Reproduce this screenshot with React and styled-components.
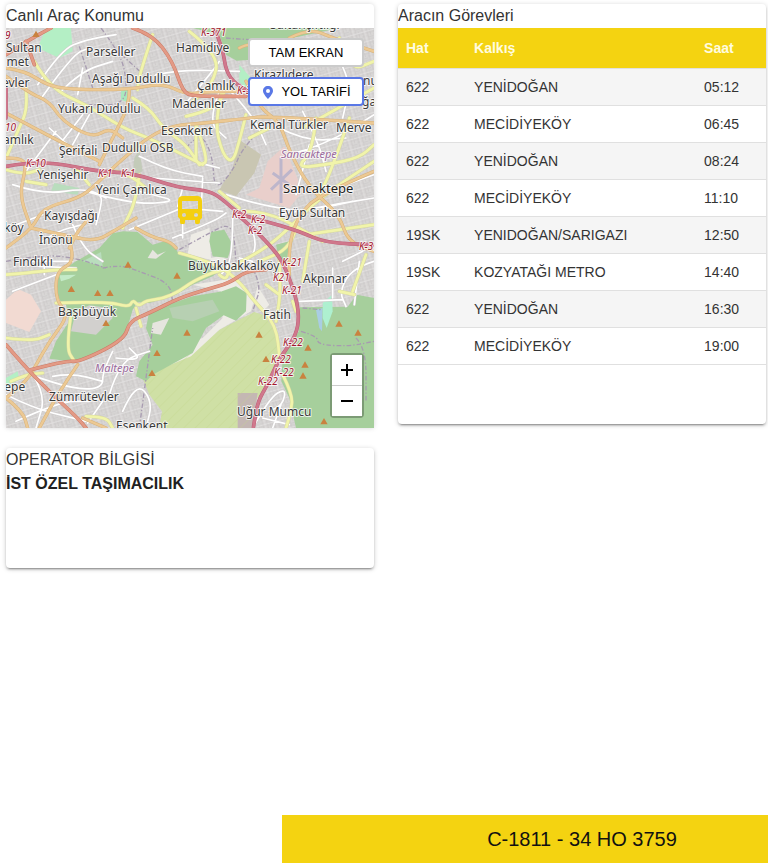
import React from "react";
import styled, { createGlobalStyle } from "styled-components";

const GlobalStyle = createGlobalStyle`
  *, *::before, *::after { box-sizing: border-box; }
  html { overflow-x: hidden; }
  body {
    margin: 0;
    background: #fff;
    color: #212121;
    font-family: "Liberation Sans", Arial, sans-serif;
    font-size: 16px;
    line-height: 24px;
  }
`;

const Page = styled.div`
  display: flex;
  flex-direction: column;
  min-height: 100vh;
`;

const Cards = styled.main`
  display: grid;
  grid-template-columns: repeat(2, minmax(0, 1fr));
  align-items: start;
  gap: 20px 24px;
  padding: 4px 2px 20px 6px;
`;

const Card = styled.section`
  min-height: ${(p) => p.$minHeight}px;
  background: #fff;
  border-radius: ${(p) => (p.$flat ? "4px 4px 0 0" : "4px")};
  overflow: hidden;
  box-shadow: ${(p) =>
    p.$flat
      ? "0 0 5px rgba(0, 0, 0, 0.16)"
      : "0 3px 1px -2px rgba(0, 0, 0, 0.2), 0 2px 2px rgba(0, 0, 0, 0.14), 0 1px 5px rgba(0, 0, 0, 0.2)"};
`;

const Title = styled.h2`
  margin: 0;
  color: #333;
  font-size: 16px;
  font-weight: 400;
  line-height: 24px;
`;

const Operator = styled.p`
  margin: 0;
  font-weight: 700;
`;

const MapFrame = styled.div`
  position: relative;
  height: 400px;
  overflow: hidden;
`;

const MapDrawing = styled.svg`
  display: block;
  width: 100%;
  height: 100%;
`;

const MapActions = styled.div`
  position: absolute;
  top: 10px;
  right: 10px;
  display: flex;
  flex-direction: column;
  gap: 10px;
  width: 116px;
`;

const MapButton = styled.button`
  display: flex;
  align-items: center;
  justify-content: center;
  gap: 6px;
  height: 29px;
  padding: 0;
  border: 2px solid ${(p) => (p.$accent ? "#5a78e6" : "#cbcbcb")};
  border-radius: 4px;
  background: #fff;
  color: #000;
  font: 13px "Liberation Sans", Arial, sans-serif;
  white-space: nowrap;
  cursor: pointer;
`;

const ZoomControl = styled.div`
  position: absolute;
  right: 10px;
  bottom: 10px;
  display: flex;
  flex-direction: column;
  border: 2px solid rgba(0, 0, 0, 0.25);
  border-radius: 4px;
  background-clip: padding-box;
`;

const ZoomButton = styled.button`
  display: grid;
  place-items: center;
  width: 30px;
  height: 30px;
  padding: 0;
  border: 0;
  background: #fff;
  cursor: pointer;

  & + & {
    height: 31px;
    border-top: 1px solid #ccc;
  }
`;

const Table = styled.table`
  width: 100%;
  table-layout: fixed;
  border-collapse: collapse;
  font-size: 14px;
  line-height: 20px;
`;

const Column = styled.col`
  width: ${(p) => p.$share}%;
`;

const HeadCell = styled.th`
  height: 40px;
  padding: 0 8px;
  border-bottom: 1px solid #e0e0e0;
  background: #f4d311;
  color: #fffce0;
  text-align: left;
  font-weight: 700;
`;

const Row = styled.tr`
  &:nth-child(odd) { background: #f5f5f5; }
`;

const Cell = styled.td`
  height: 37px;
  padding: 0 8px;
  border-bottom: 1px solid #e0e0e0;
  color: #333;
  white-space: nowrap;
`;

const VehicleBar = styled.footer`
  margin-top: auto;
  margin-left: 282px;
  overflow: hidden;
  background: #f4d311;
  color: #111;
`;

const VehicleName = styled.div`
  min-width: 600px;
  font-size: 20px;
  line-height: 48px;
  text-align: center;
`;

const GREENS = [
  "M560 0H1000L860 30L735 60V95L692 98L660 80L640 20Z",
  "M280 660L320 616L352 610L395 612L440 650L480 638L505 655L520 680L600 698L650 722L620 745L560 770L510 800L430 825L395 822L380 845L370 880L350 935L230 995L190 1000L130 992L150 940L190 880L180 830L165 822L148 790L150 740L210 700Z",
  "M430 850L560 805L650 790L655 860L600 900L560 975L440 1040L420 1060L390 1045L400 1000L440 950L420 900Z",
  "M615 612L655 605L680 650L665 690L620 685L610 640Z",
  "M648 790L690 775L722 795L720 850L690 878L650 860L640 820Z",
  "M882 838L1025 836L1052 800L1104 810V1200H870L850 1110L826 1060L830 985L878 910Z",
  "M810 650L850 640L840 720L820 700Z",
];

const FIELDS = [
  ["M410 1050L560 975L640 905L745 852L775 862L805 905L822 955L815 1000L775 1080L740 1130L735 1200H460L468 1150L430 1100Z", "#cfe0a5"],
  ["M560 770L690 750L745 815L735 850L640 905L555 985L470 1020L430 1040L480 980L590 930L650 870L645 790Z", "#eeece6"],
  ["M555 620L610 600L615 690L660 680L650 705L545 678Z", "#eeece6"],
  ["M755 775L790 830L770 850L745 810Z", "#eeece6"],
  ["M700 335L765 380L745 435L690 505L640 485L680 420Z", "#c9c6b2"],
  ["M785 400L835 355L890 490L850 540L720 500L760 480Z", "#e9cfcb"],
  ["M0 815L35 783L75 800L105 850L70 912L0 885Z", "#f2dad2"],
  ["M120 0H195L200 70L160 90L95 60Z", "#b4efc5"],
  ["M700 110L735 150L720 185L700 160Z", "#b4efc5"],
  ["M0 1050L35 1030L40 1055L0 1075Z", "#b4efc5"],
  ["M145 465L220 480L215 500L135 490Z", "#b9ddbd"],
  ["M345 190L375 180L370 225L345 215Z", "#a9e8bd"],
  ["M695 1095H755L738 1200H695Z", "#c4b7b3"],
  ["M400 365L410 430L380 445L385 390Z", "#c3cbb9"],
];

const CLEARINGS = [
  ["M425 690L440 665L455 680L480 670L450 692ZM440 885L490 870L465 920L435 915Z", "#e6e5df"],
  ["M210 850L250 832L310 840L320 870L270 920L195 910Z", "#d2d0ce"],
  ["M210 740L160 742L165 760L190 752Z", "#c4ebc8"],
  ["M230 700L285 672L290 715Z", "#b9ddbd"],
  ["M490 840L620 815L640 850L560 880L500 870Z", "#b7d0b2"],
  ["M930 845L950 840L948 910L940 900Z", "#a9cde3"],
  ["M950 825L978 800L980 850L962 900L950 870Z", "#aef0d0"],
];

const WHITE_ROADS = [
  "M95 170L165 65L240 35L330 20M110 205L200 80L250 60M165 190L225 130L320 100M215 200L230 120",
  "M130 300L180 345M60 430L150 310M160 350L230 260M200 350L250 260M20 470L110 500L240 480L300 510M240 490L380 530L515 520L440 500L400 490",
  "M515 545L370 605M515 535L530 480M590 545L650 550M500 630L625 580L660 555M530 590L530 630",
  "M400 385L480 425L590 445M440 335L560 400L640 420M590 450L585 560M440 450L640 465M660 500L740 525L850 545",
  "M450 140L520 125L700 130M540 225L620 130L640 100M660 175L740 260L780 350M640 190L605 280L660 330",
  "M740 610L760 670L690 720M680 570L680 700L640 745M700 690L740 700",
  "M850 380L960 350L1104 260M1020 470L1104 440M820 560L980 530L1104 510M950 540L1040 520M910 350L870 500",
  "M880 820L1010 815M1104 700L1040 720L1000 790L1020 835M1060 700L1045 830M980 720L980 810M1010 700L1070 670",
  "M80 700L200 700M100 715L210 720M115 690L115 740M20 790L150 740",
  "M320 970L290 1030L290 1080L210 1085L70 1040M140 1045L195 1035L290 1060M310 1100L340 1000L430 970M330 990L410 1000L370 960M350 1150L390 1060L440 1120L420 1200",
  "M0 1100L80 1140L200 1170L240 1180M80 1040L120 1100L90 1200M30 1180L160 1120L250 1120M245 1185L290 1120",
  "M740 1200L790 1110L840 1080L830 1130L790 1150M770 1170L850 1190M800 1200L825 1130",
  "M270 590L290 520L280 500M110 640L150 610L230 590M200 590L230 660L290 700M30 590L110 560",
  "M960 40L1040 140L1010 270M890 250L940 350L960 430M820 300L900 340L1020 330",
];

const YELLOW_ROADS = [
  "M440 20L400 140L395 185M85 100L130 180L250 235L350 300L440 335L590 410",
  "M60 180L65 240L40 300L0 390M380 210L430 240L470 300L540 350L580 410M570 290L570 395",
  "M650 180L625 280L650 380L680 405L700 340L720 260M550 10L640 80L620 170L560 220M540 265L630 245L660 180M570 290L610 400L580 410",
  "M400 440L390 520L350 600M330 430L370 440L420 480M210 420L250 470M640 490L700 540",
  "M0 740L60 735L150 725L210 725M150 825L300 820L370 838L380 815L398 835L420 818L470 812L520 790L560 760L640 725L700 725",
  "M195 860L180 960L205 1000M390 840L405 895M520 675L630 705L700 760L745 820L810 890L822 1000",
  "M640 740L660 760L670 720L780 660L850 600L940 510L1104 400M870 600L855 660L760 700",
  "M720 550L790 550L950 640M820 690L825 790L810 880M780 770L820 800M900 620L1104 590M910 640L890 760",
  "M930 270L920 370L870 420L960 410L1060 390L1104 350M1030 270L980 420L930 520M730 330L790 300M890 300L1104 180",
  "M860 820L870 850M1000 790L1045 800M1040 790L1080 680M0 930L80 940L130 920M15 1060L60 1040L110 1035",
  "M830 1040L860 1100L855 1150L840 1200M240 1165L300 1165L320 1200M1000 30L1030 130L1104 100",
  "M0 425L50 440L100 425M120 470L60 460",
];

const ORANGE_ROADS = [
  "M0 120L60 130L120 170L190 185L370 185L470 165L540 200L610 190L735 190M370 185L370 230L320 330L280 410",
  "M0 145L70 195L130 220L170 280L260 330L310 300L350 330M400 350L470 295L600 285L730 270L780 265L1104 285",
  "M0 255L160 340L280 400M400 350L330 410L270 470L220 510L110 540L80 600L0 660M0 390L50 390L60 420L40 500L75 600",
  "M75 600L190 625L270 640L330 605L390 570M190 640L210 700L150 730L150 820L190 860L130 940L85 1020",
  "M720 160L760 240L820 280L850 370L910 480L1000 560L1025 640L1104 670M1104 430L940 500L880 560L850 640L850 740",
  "M850 30L910 0L980 30L1104 70M700 60L740 40L790 80",
  "M215 1010L160 1090L100 1200M80 1030L60 1060L0 1110M230 1170L300 1200M0 1110L50 1150L65 1200",
  "M390 600L430 625L490 640L510 660M260 560L220 600L190 660",
];

const RED_ROADS = [
  "M380 0L440 20L500 100L530 190L560 205L720 205M0 80L70 35L135 0",
  "M75 1025L180 998L220 1002L355 935L370 880L430 855L520 810L600 785L670 765L720 730L780 725M60 40L85 110",
  "M0 950L60 1020L150 1110L215 1170L240 1200",
];

const MOTORWAYS = [
  "M0 415L60 405L150 405L270 430L380 435L520 480L600 487L640 505L700 560L780 580L880 610L960 645L1104 650",
  "M625 0L650 60L660 130L690 170L740 195M0 180L0 270",
  "M700 565L730 590L790 650L830 700L865 790L880 860L870 925L820 990L785 1070L755 1120L742 1200",
];

const BOUNDARIES = [
  "M285 0L330 60L360 130L360 230L250 230M220 55L260 180M325 60L440 165",
  "M520 665L600 620L680 580L690 700M290 720L340 710L400 730L490 765L500 820",
  "M540 360L580 310L620 380L625 490L680 430L710 360L790 280",
  "M885 910L935 925L935 950L1030 955L1104 940M890 840L945 845M1050 930L1080 960L1080 1120",
  "M0 700L110 680L210 690L300 720M660 30L730 35M720 690L770 760L740 850M400 1200L420 1050L440 900",
];

const PEAKS = [
  [366, 710], [513, 743], [196, 783], [275, 795], [312, 795], [300, 885], [543, 914], [453, 975],
  [438, 1035], [759, 920], [780, 993], [906, 959], [897, 1010], [891, 1043], [999, 887], [1056, 914],
  [954, 1180], [90, 18],
];

const PLACES = [
  [0, 24, "Sultan"], [-7, 38, "hmet"], [-4, 59, "evler"], [80, 28, "Parseller"], [170, 24, "Hamidiye"],
  [86, 55, "Aşağı Dudullu"], [191, 62, "Çamlık"], [166, 80, "Madenler"], [52, 85, "Yukarı Dudullu"],
  [155, 107, "Esenkent"], [-3, 116, "amlık"], [53, 127, "Şerifali"], [96, 124, "Dudullu OSB"],
  [31, 151, "Yenişehir"], [90, 166, "Yeni Çamlıca"], [38, 192, "Kayışdağı"], [-2, 204, "köy"],
  [33, 216, "İnönü"], [7, 238, "Fındıklı"], [182, 242, "Büyükbakkalköy"], [273, 189, "Eyüp Sultan"],
  [297, 255, "Akpınar"], [52, 288, "Başıbüyük"], [257, 291, "Fatih"], [-6, 363, "tepe"],
  [43, 373, "Zümrütevler"], [110, 402, "Esenkent"], [231, 388, "Uğur Mumcu"], [244, 101, "Kemal Türkler"],
  [330, 104, "Merve"], [248, 51, "Kirazlıdere"], [264, 1, "Sultançiftliği"], [357, 57, "nur"], [356, 78, "ğaz"],
];

const ROAD_CODES = [
  [195, 8, "K-371"], [20, 139, "K-10"], [92, 149, "K-1"], [115, 149, "K-1"], [231, 66, "K-3"],
  [226, 190, "K-2"], [245, 195, "K-2"], [242, 206, "K-2"], [276, 238, "K-21"], [267, 253, "K21"],
  [276, 266, "K-21"], [277, 318, "K-22"], [265, 335, "K-22"], [268, 348, "K-22"], [252, 357, "K-22"],
  [353, 222, "K-37"], [-1, 103, "10"], [-1, 11, "9"],
];

const Label = styled.text`
  fill: ${(p) => p.$fill};
  stroke: rgba(255, 255, 255, 0.75);
  stroke-width: 2px;
  stroke-linejoin: round;
  paint-order: stroke;
  font-family: "Noto Sans", sans-serif;
  font-size: ${(p) => p.$size}px;
  font-style: ${(p) => (p.$italic ? "italic" : "normal")};
`;

/* Rounds the bends of a polyline: each inner point becomes the control point of a curve. */
function smooth(d) {
  return d
    .split("M")
    .filter(Boolean)
    .map((part) => {
      const pts = part.split("L").map((pair) => pair.trim().split(" ").map(Number));
      let out = `M${pts[0].join(" ")}`;
      for (let i = 1; i < pts.length - 1; i += 1) {
        const [x, y] = pts[i];
        const [nx, ny] = pts[i + 1];
        out += `Q${x} ${y} ${(x + nx) / 2} ${(y + ny) / 2}`;
      }
      return `${out}L${pts[pts.length - 1].join(" ")}`;
    })
    .join("");
}

function Roads({ paths, casing, fill, width }) {
  const d = paths.map(smooth).join("");
  return (
    <g fill="none" strokeLinejoin="round" strokeLinecap="round">
      <path d={d} stroke={casing} strokeWidth={width + 3} />
      <path d={d} stroke={fill} strokeWidth={width} />
    </g>
  );
}

function CityMap() {
  return (
    <MapDrawing viewBox="0 0 368 400" preserveAspectRatio="xMidYMid slice" role="img" aria-label="Canlı araç haritası">
      <defs>
        <pattern id="blocks" width="34" height="30" patternUnits="userSpaceOnUse" patternTransform="rotate(-16)">
          <path d="M0 3H34M0 12H34M0 21H18M18 26H34M5 0V30M18 0V30M27 3V21" stroke="#cac7c7" strokeWidth="2" fill="none" />
          <path d="M0 7H34M11 0V30" stroke="#e6e5e5" strokeWidth="2" fill="none" />
        </pattern>
        <pattern id="hatch" width="24" height="24" patternUnits="userSpaceOnUse" patternTransform="rotate(45)">
          <path d="M0 0V24" stroke="#c2d68d" strokeWidth="2" />
        </pattern>
      </defs>
      <rect width="368" height="400" fill="#d8d6d5" />
      <g transform="scale(0.33333)">
        <rect width="1104" height="1200" fill="url(#blocks)" />
        {FIELDS.map(([d, fill]) => <path key={d} d={d} fill={fill} />)}
        <path d={FIELDS[0][0]} fill="url(#hatch)" />
        <path d={GREENS.join("")} fill="#a6cf9c" />
        {CLEARINGS.map(([d, fill]) => <path key={d} d={d} fill={fill} />)}
        <path d="M825 390V525M795 485L858 425M800 435L850 470" stroke="#bdb6cb" strokeWidth="9" fill="none" />
        <path d={BOUNDARIES.map(smooth).join("")} fill="none" stroke="#a79bb0" strokeWidth="4" strokeDasharray="14 6 4 6" />
        <Roads paths={WHITE_ROADS} casing="#cfcccc" fill="#ffffff" width={5} />
        <Roads paths={YELLOW_ROADS} casing="#d6d8a0" fill="#f1f4aa" width={8} />
        <Roads paths={ORANGE_ROADS} casing="#d8b279" fill="#ecc994" width={7} />
        <Roads paths={RED_ROADS} casing="#cb7a66" fill="#e39a85" width={8} />
        <Roads paths={MOTORWAYS} casing="#bd5f78" fill="#d0788c" width={8} />
        {PEAKS.map(([x, y]) => <path key={`${x}-${y}`} d={`M${x} ${y - 10}l11 19h-22z`} fill="#c9823f" />)}
      </g>
      {PLACES.map(([x, y, name]) => (
        <Label key={`${x}-${y}`} x={x} y={y} $fill="#3a3a3a" $size={12}>{name}</Label>
      ))}
      <Label x="277" y="165" $fill="#222" $size={13}>Sancaktepe</Label>
      <Label x="275" y="130" $fill="#9a6a9c" $size={11} $italic>Sancaktepe</Label>
      <Label x="89" y="344" $fill="#9a6a9c" $size={11} $italic>Maltepe</Label>
      {ROAD_CODES.map(([x, y, code]) => (
        <Label key={`${x}-${y}`} x={x} y={y} $fill="#a3172f" $size={10} $italic>{code}</Label>
      ))}
      <path
        fill="#f4cf10"
        fillRule="evenodd"
        d="M177 168H191Q196 168 196 173V190L194 192V194Q194 196 192 196H190Q189 196 189 194V192H179V194Q179 196 178 196H175Q174 196 174 194V191L172 189V173Q172 168 177 168ZM176 173V181H192V173ZM178 185A2 2 0 1 0 178 189A2 2 0 1 0 178 185ZM190 185A2 2 0 1 0 190 189A2 2 0 1 0 190 185Z"
      />
    </MapDrawing>
  );
}

const TRIPS = [
  ["622", "YENİDOĞAN", "05:12"],
  ["622", "MECİDİYEKÖY", "06:45"],
  ["622", "YENİDOĞAN", "08:24"],
  ["622", "MECİDİYEKÖY", "11:10"],
  ["19SK", "YENIDOĞAN/SARIGAZI", "12:50"],
  ["19SK", "KOZYATAĞI METRO", "14:40"],
  ["622", "YENİDOĞAN", "16:30"],
  ["622", "MECİDİYEKÖY", "19:00"],
];

export default function App() {
  return (
    <Page>
      <GlobalStyle />
      <Cards>
        <Card $minHeight={424} $flat>
          <Title>Canlı Araç Konumu</Title>
          <MapFrame>
            <CityMap />
            <MapActions>
              <MapButton type="button">TAM EKRAN</MapButton>
              <MapButton type="button" $accent>
                <svg width="14" height="16" viewBox="0 0 14 16" aria-hidden="true">
                  <path fill="#5a78e6" fillRule="evenodd" d="M7 2C4 2 2 4 2 7C2 10 7 15 7 15S12 10 12 7C12 4 10 2 7 2ZM7 5A2 2 0 1 1 7 9A2 2 0 1 1 7 5Z" />
                </svg>
                YOL TARİFİ
              </MapButton>
            </MapActions>
            <ZoomControl>
              <ZoomButton type="button" aria-label="Yakınlaştır">
                <svg width="14" height="14" viewBox="0 0 14 14" aria-hidden="true">
                  <path d="M1 7H13M7 1V13" stroke="#000" strokeWidth="2" />
                </svg>
              </ZoomButton>
              <ZoomButton type="button" aria-label="Uzaklaştır">
                <svg width="14" height="14" viewBox="0 0 14 14" aria-hidden="true">
                  <path d="M1 7H13" stroke="#000" strokeWidth="2" />
                </svg>
              </ZoomButton>
            </ZoomControl>
          </MapFrame>
        </Card>
        <Card $minHeight={420}>
          <Title>Aracın Görevleri</Title>
          <Table>
            <colgroup>
              <Column $share={18.5} />
              <Column $share={62.5} />
              <Column $share={19} />
            </colgroup>
            <thead>
              <tr>
                <HeadCell scope="col">Hat</HeadCell>
                <HeadCell scope="col">Kalkış</HeadCell>
                <HeadCell scope="col">Saat</HeadCell>
              </tr>
            </thead>
            <tbody>
              {TRIPS.map(([line, stop, time]) => (
                <Row key={time}>
                  <Cell>{line}</Cell>
                  <Cell>{stop}</Cell>
                  <Cell>{time}</Cell>
                </Row>
              ))}
            </tbody>
          </Table>
        </Card>
        <Card $minHeight={120}>
          <Title>OPERATOR BİLGİSİ</Title>
          <Operator>İST ÖZEL TAŞIMACILIK</Operator>
        </Card>
      </Cards>
      <VehicleBar>
        <VehicleName>C-1811 - 34 HO 3759</VehicleName>
      </VehicleBar>
    </Page>
  );
}
